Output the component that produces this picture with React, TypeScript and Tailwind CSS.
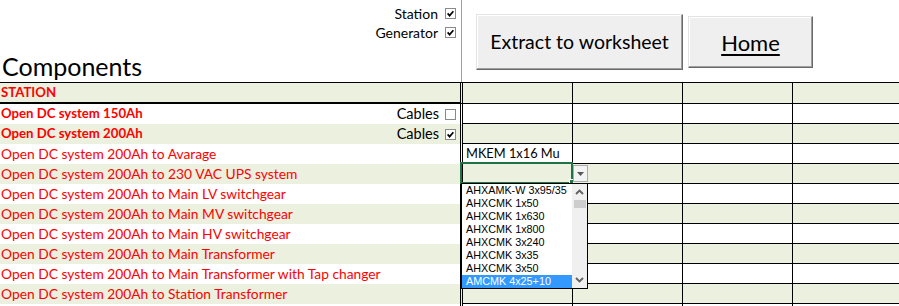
import React from "react";

const rows = [
  { label: "STATION", bold: true },
  { label: "Open DC system 150Ah", bold: true, cables: false },
  { label: "Open DC system 200Ah", bold: true, cables: true },
  { label: "Open DC system 200Ah to Avarage", cell: "MKEM 1x16 Mu" },
  { label: "Open DC system 200Ah to 230 VAC UPS system" },
  { label: "Open DC system 200Ah to Main LV switchgear" },
  { label: "Open DC system 200Ah to Main MV switchgear" },
  { label: "Open DC system 200Ah to Main HV switchgear" },
  { label: "Open DC system 200Ah to Main Transformer" },
  { label: "Open DC system 200Ah to Main Transformer with Tap changer" },
  { label: "Open DC system 200Ah to Station Transformer" },
  { label: "" },
];

const cableTypes = [
  "AHXAMK-W 3x95/35",
  "AHXCMK 1x50",
  "AHXCMK 1x630",
  "AHXCMK 1x800",
  "AHXCMK 3x240",
  "AHXCMK 3x35",
  "AHXCMK 3x50",
  "AMCMK 4x25+10",
];

function Check({ checked }: { checked: boolean }) {
  return (
    <span className="w-[11px] h-[11px] border border-[#8a8a8a] bg-white flex items-center justify-center shrink-0">
      {checked && (
        <svg width="7" height="7" viewBox="0 0 7 7">
          <path d="M0.6 3.4 L2.6 5.6 L6.4 1.2" stroke="#000" strokeWidth="1.7" fill="none" />
        </svg>
      )}
    </span>
  );
}

function Chevron({ up }: { up?: boolean }) {
  return (
    <svg width="9" height="6" viewBox="0 0 9 6">
      <path
        d={up ? "M1 5 L4.5 1.5 L8 5" : "M1 1 L4.5 4.5 L8 1"}
        stroke="#606060"
        strokeWidth="1.8"
        fill="none"
      />
    </svg>
  );
}

const btn =
  "bg-[#efefef] border border-t-[#e3e3e3] border-l-[#e3e3e3] border-b-[#696969] border-r-[#696969] shadow-[inset_-1px_-1px_0_#a0a0a0,inset_1px_1px_0_#ffffff] text-black flex items-center justify-center";

export default function App() {
  return (
    <div className="relative w-[899px] h-[306px] overflow-hidden bg-white font-['Lato','Liberation_Sans',sans-serif] text-black">
      {/* Header */}
      <div className="flex h-[82px]">
        <div className="w-[461px] flex flex-col">
          <div className="flex flex-col items-end pt-[3px] pr-[5px] text-[14px]">
            <div className="h-[20px] flex items-center gap-[7px]">
              <span>Station</span>
              <Check checked />
            </div>
            <div className="h-[19px] flex items-center gap-[7px]">
              <span>Generator</span>
              <Check checked />
            </div>
          </div>
          <h1 className="mt-[12px] pl-[2px] text-[25px] leading-[25px]">Components</h1>
        </div>
        <div className="border-l border-[#a0a0a0] flex items-start flex-1">
          <button className={`${btn} ml-[14px] mt-[14px] w-[207px] h-[56px] text-[19.5px]`}>
            Extract to worksheet
          </button>
          <button className={`${btn} ml-[5px] mt-[16px] w-[125px] h-[52px] text-[22px]`}>
            <span className="underline decoration-2 underline-offset-[3px]">Home</span>
          </button>
        </div>
      </div>

      {/* Table */}
      <div className="border-t border-black">
        {rows.map((r, i) => {
          const beige = i % 2 === 0;
          const first = i === 0;
          const bg = beige ? "bg-[#ebf1de]" : "bg-white";
          return (
            <div key={i} className={`flex ${first ? "h-[21px]" : "h-[20px]"}`}>
              <div
                className={`w-[463px] border-r-[3px] border-double border-r-black flex items-center justify-between pl-[1px] pr-[4px] ${bg} ${
                  first ? "border-b-2 border-b-black" : ""
                }`}
              >
                <span
                  className={`text-[#ff0000] whitespace-nowrap ${
                    r.bold ? "font-bold text-[13.2px]" : "text-[13.8px]"
                  }`}
                >
                  {r.label}
                </span>
                {r.cables !== undefined && (
                  <span className="flex items-center gap-[6px] text-[14.5px]">
                    Cables
                    <Check checked={r.cables} />
                  </span>
                )}
              </div>
              <div className={`w-[110px] border-r border-b border-black flex items-center pl-[3px] text-[12.8px] ${bg}`}>
                {r.cell}
              </div>
              <div className={`w-[110px] border-r border-b border-black ${bg}`} />
              <div className={`w-[110px] border-r border-b border-black ${bg}`} />
              <div className={`flex-1 border-b border-black ${bg}`} />
            </div>
          );
        })}
      </div>

      {/* Active cell */}
      <div className="absolute left-[460px] top-[162px] w-[113px] h-[22px] border-2 border-[#217346]" />
      <div className="absolute left-[569px] top-[179px] w-[5px] h-[5px] bg-[#217346] border border-white" />

      {/* Dropdown button */}
      <div className="absolute left-[573px] top-[165px] w-[15px] h-[17px] bg-[#f3f3f3] border border-[#ababab] flex items-center justify-center">
        <svg width="7" height="4" viewBox="0 0 7 4">
          <path d="M0 0 H7 L3.5 4 Z" fill="#555" />
        </svg>
      </div>

      {/* Dropdown list */}
      <div className="absolute left-[461px] top-[183px] w-[127px] h-[106px] border border-black bg-white flex">
        <div className="w-[110px] flex flex-col overflow-hidden font-['Liberation_Sans',Arial,sans-serif]">
          {cableTypes.map((c, i) => (
            <div
              key={c}
              className={`h-[13px] leading-[13px] pl-[4px] text-[10.8px] whitespace-nowrap ${
                i === cableTypes.length - 1 ? "bg-[#3399ff] text-white" : "text-black"
              }`}
            >
              {c}
            </div>
          ))}
        </div>
        <div className="flex-1 bg-[#f0f0f0] flex flex-col items-center">
          <div className="h-[16px] flex items-center justify-center">
            <Chevron up />
          </div>
          <div className="w-[12px] h-[8px] bg-[#cdcdcd]" />
          <div className="flex-1" />
          <div className="h-[16px] flex items-center justify-center">
            <Chevron />
          </div>
        </div>
      </div>
    </div>
  );
}
